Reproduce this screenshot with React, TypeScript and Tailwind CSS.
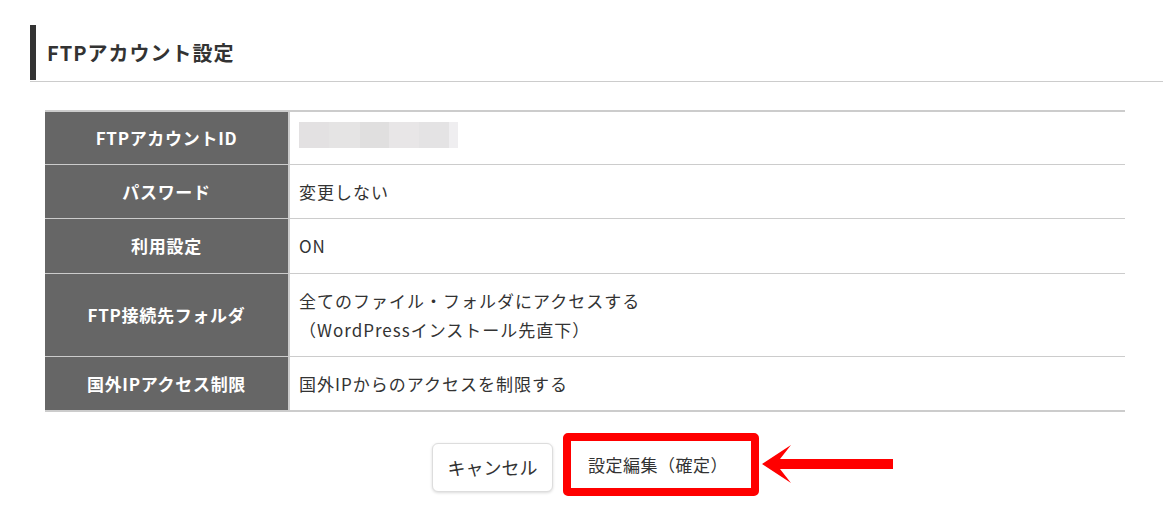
import React from "react";

const font = { fontFamily: '"Noto Sans CJK JP", "Noto Sans", sans-serif' };

function Row({
  label,
  children,
  h,
  first,
}: {
  label: string;
  children: React.ReactNode;
  h: string;
  first?: boolean;
}) {
  return (
    <div className={`flex ${first ? "" : "border-t border-[#cccccc]"}`}>
      <div
        className={`w-[243px] shrink-0 bg-[#666666] flex items-center justify-center text-white font-bold text-[17px] tracking-[0.7px] ${h}`}
      >
        {label}
      </div>
      <div className={`w-[2px] shrink-0 bg-[#cccccc]`} />
      <div className={`flex-1 flex flex-col justify-center pl-[9px] text-[#333333] text-[17px] tracking-[1px] ${h}`}>
        {children}
      </div>
    </div>
  );
}

export default function App() {
  return (
    <div className="w-[1166px] h-[521px] bg-white overflow-hidden" style={font}>
      <div className="pt-[25px] pl-[30px] w-[1163px]">
        <div className="border-b border-[#cccccc] pb-[1px]">
          <div className="h-[55px] border-l-[6px] border-[#333333] flex items-center pl-[11px] text-[20px] tracking-[1px] font-bold text-[#333333]">
            FTPアカウント設定
          </div>
        </div>
      </div>

      <div className="ml-[45px] mt-[28px] w-[1080px] border-t-2 border-b-2 border-[#cccccc]">
        <Row label="FTPアカウントID" h="h-[52px]" first>
          <div className="flex w-[159px] h-[26px] -mt-[6px]">
            <div className="w-[30px] bg-[#e3e1e2]" />
            <div className="w-[31px] bg-[#e5e4e4]" />
            <div className="w-[29px] bg-[#e0dfdf]" />
            <div className="w-[30px] bg-[#e8e6e7]" />
            <div className="w-[30px] bg-[#e4e3e4]" />
            <div className="w-[9px] bg-[#efeef0]" />
          </div>
        </Row>
        <Row label="パスワード" h="h-[53px]">
          変更しない
        </Row>
        <Row label="利用設定" h="h-[54px]">
          ON
        </Row>
        <Row label="FTP接続先フォルダ" h="h-[82px]">
          <div className="leading-[29px]">全てのファイル・フォルダにアクセスする</div>
          <div className="leading-[29px]">（WordPressインストール先直下）</div>
        </Row>
        <Row label="国外IPアクセス制限" h="h-[53px]">
          国外IPからのアクセスを制限する
        </Row>
      </div>

      <div className="flex items-center pl-[432px] mt-[21px]">
        <button className="mt-[6px] w-[121px] h-[49px] rounded-[6px] border border-[#dddddd] bg-white shadow-[0_1px_3px_rgba(0,0,0,0.15)] text-[18px] text-[#333333] flex items-center justify-center">
          キャンセル
        </button>
        <div className="ml-[10px] border-[8px] border-[#ff0000] rounded-[5px]">
          <div className="w-[180px] h-[47px] bg-white flex items-center pl-[17px] text-[17px] text-[#333333] tracking-[0.5px]">
            設定編集（確定）
          </div>
        </div>
        <svg width="131" height="40" viewBox="0 0 131 40" className="ml-[3px] -mt-[1px]">
          <path
            d="M0 20 L29 1 L18 15 L131 15 L131 25 L18 25 L29 39 Z"
            fill="#ff0000"
          />
        </svg>
      </div>
    </div>
  );
}
